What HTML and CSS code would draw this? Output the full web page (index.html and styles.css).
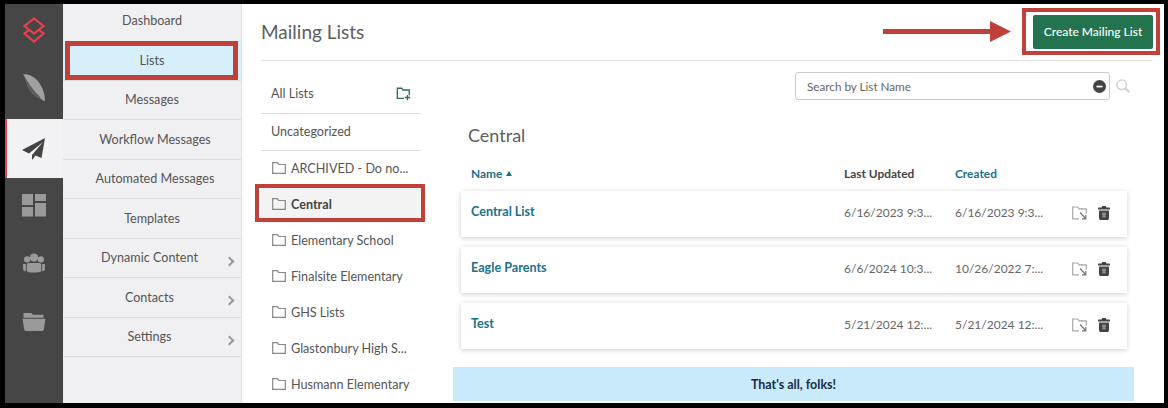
FILE: index.html
```html
<!DOCTYPE html>
<html lang="en">
<head>
<meta charset="utf-8">
<title>Mailing Lists</title>
<link rel="stylesheet" href="styles.css">
</head>
<body>
<div class="app">
  <nav class="rail">
    <div class="rail-item rail-logo"><svg width="22" height="26" viewBox="0 0 22 26" fill="none" stroke="#e8404f" stroke-width="2.2"><path d="M11 1.500 20.500 9 11 16.500 1.500 9Z"/><path d="M6 13 1.500 16.500 11 24.500 20.500 16.500 16 13"/></svg></div>
    <div class="rail-item"><svg width="24" height="30" viewBox="0 0 24 30"><path fill="#a0a0a0" d="M1 1c6 0 13 3 17 10 3 5 5 10 5 17-1 0-3-1-4-2C12 23 7 18 5 11 4 7 3 4 1 1Z"/><path fill="#5c5c5c" d="M1 1c2 3 3 6 4 10 2 7 7 12 14 15l-1-2C12 18 6 10 1 1Z"/></svg></div>
    <div class="rail-item rail-active"><svg width="24" height="24" viewBox="0 0 24 24" fill="#444"><path d="M23 1 0 13l7 3.500L21 5 10 18v5l3.500-4.500 6 2.500Z"/></svg></div>
    <div class="rail-item"><svg width="24" height="23" viewBox="0 0 24 23" fill="#9a9a9a"><path d="M0 0h11v11H0zM0 13h11v9.500H0zM13 0h11v7H13zM13 9h11v13.500H13z"/></svg></div>
    <div class="rail-item"><svg width="24" height="20" viewBox="0 0 24 22" fill="#9a9a9a"><circle cx="12" cy="5" r="4.500"/><circle cx="4.500" cy="7" r="3.500"/><circle cx="19.500" cy="7" r="3.500"/><path d="M6 11h12c1.500 0 2 1 2 3v6c-2 2-14 2-16 0v-6c0-2 .5-3 2-3Z"/><path d="M0 12h3v8c-2 0-3-1-3-2ZM24 12h-3v8c2 0 3-1 3-2Z"/></svg></div>
    <div class="rail-item"><svg width="24" height="19" viewBox="0 0 24 20" fill="#9a9a9a"><path d="M1 1h8l2 2h11v3H1z"/><path d="M0 7h24l-1.500 11c0 1-1 2-2 2h-17c-1 0-2-1-2-2Z"/></svg></div>
  </nav>

  <ul class="menu">
    <li class="menu-item">Dashboard</li>
    <li class="menu-item menu-selected">Lists</li>
    <li class="menu-item">Messages</li>
    <li class="menu-item menu-wide">Workflow Messages</li>
    <li class="menu-item menu-wide">Automated Messages</li>
    <li class="menu-item">Templates</li>
    <li class="menu-item menu-more">Dynamic Content</li>
    <li class="menu-item menu-more">Contacts</li>
    <li class="menu-item menu-more">Settings</li>
  </ul>

  <main class="main">
    <header class="page-head">
      <h1 class="page-title">Mailing Lists</h1>
      <button class="btn-create" type="button">Create Mailing List</button>
    </header>
    <div class="columns">
      <aside class="folders">
        <div class="folder-top">
          <span>All Lists</span>
          <svg width="15" height="14" viewBox="0 0 17 15" fill="none" stroke="#24734f" stroke-width="1.500"><path d="M9 12.500H1.500V1h5l1.500 2h7v6"/><path d="M13 8.500v6M10 11.500h6"/></svg>
        </div>
        <div class="folder-top folder-uncat">Uncategorized</div>
        <div class="folder"><svg class="folder-icon" viewBox="0 0 14 12"><path d="M.7 11.300V.7h4.500l1.500 1.800h6.600v8.800z"/></svg><span>ARCHIVED - Do no...</span></div>
        <div class="folder folder-current"><svg class="folder-icon" viewBox="0 0 14 12"><path d="M.7 11.300V.7h4.500l1.500 1.800h6.600v8.800z"/></svg><span>Central</span></div>
        <div class="folder"><svg class="folder-icon" viewBox="0 0 14 12"><path d="M.7 11.300V.7h4.500l1.500 1.800h6.600v8.800z"/></svg><span>Elementary School</span></div>
        <div class="folder"><svg class="folder-icon" viewBox="0 0 14 12"><path d="M.7 11.300V.7h4.500l1.500 1.800h6.600v8.800z"/></svg><span>Finalsite Elementary</span></div>
        <div class="folder"><svg class="folder-icon" viewBox="0 0 14 12"><path d="M.7 11.300V.7h4.500l1.500 1.800h6.600v8.800z"/></svg><span>GHS Lists</span></div>
        <div class="folder"><svg class="folder-icon" viewBox="0 0 14 12"><path d="M.7 11.300V.7h4.500l1.500 1.800h6.600v8.800z"/></svg><span>Glastonbury High S...</span></div>
        <div class="folder"><svg class="folder-icon" viewBox="0 0 14 12"><path d="M.7 11.300V.7h4.500l1.500 1.800h6.600v8.800z"/></svg><span>Husmann Elementary</span></div>
      </aside>

      <section class="content">
        <div class="search-row">
          <div class="search-box">
            <span>Search by List Name</span>
            <svg width="13" height="13" viewBox="0 0 13 13"><circle cx="6.500" cy="6.500" r="6.500" fill="#444"/><rect x="3.500" y="5.700" width="6" height="1.700" fill="#fff"/></svg>
          </div>
          <svg width="14" height="14" viewBox="0 0 14 14" fill="none" stroke="#d0d0d0" stroke-width="1.500"><circle cx="5.800" cy="5.800" r="4.800"/><path d="M9.300 9.300 13.300 13.300" stroke-width="2"/></svg>
        </div>
        <h2 class="group-title">Central</h2>
        <div class="table-head">
          <span class="col-name sort">Name <i class="caret"></i></span>
          <span class="col-date">Last Updated</span>
          <span class="col-date sort">Created</span>
          <span class="col-actions"></span>
        </div>
        <article class="card">
          <a class="col-name card-name">Central List</a>
          <span class="col-date">6/16/2023 9:3...</span>
          <span class="col-date">6/16/2023 9:3...</span>
          <span class="col-actions">
            <svg width="15" height="14" viewBox="0 0 15 14" fill="none" stroke="#a8a8a8" stroke-width="1.200"><path d="M7 12.800H.7V1h5l1.500 1.800h7v5"/><path d="M8 6.500 13.500 12.500M13.800 9v3.800H10" stroke="#777"/></svg>
            <svg width="12" height="14" viewBox="0 0 12 14" fill="#444"><path d="M4.200 0h3.600l.5 1.500H11c.6 0 1 .4 1 1v1H0v-1c0-.6.4-1 1-1h2.700zM1 4.500h10v7.700c0 1-.8 1.800-1.800 1.800H2.800c-1 0-1.800-.8-1.800-1.800z"/><path d="M4.600 6.500h.9v5h-.9zM6.500 6.500h.9v5h-.9z" fill="#ccc"/></svg>
          </span>
        </article>
        <article class="card">
          <a class="col-name card-name">Eagle Parents</a>
          <span class="col-date">6/6/2024 10:3...</span>
          <span class="col-date">10/26/2022 7:...</span>
          <span class="col-actions">
            <svg width="15" height="14" viewBox="0 0 15 14" fill="none" stroke="#a8a8a8" stroke-width="1.200"><path d="M7 12.800H.7V1h5l1.500 1.800h7v5"/><path d="M8 6.500 13.500 12.500M13.800 9v3.800H10" stroke="#777"/></svg>
            <svg width="12" height="14" viewBox="0 0 12 14" fill="#444"><path d="M4.200 0h3.600l.5 1.500H11c.6 0 1 .4 1 1v1H0v-1c0-.6.4-1 1-1h2.700zM1 4.500h10v7.700c0 1-.8 1.800-1.800 1.800H2.800c-1 0-1.800-.8-1.800-1.800z"/><path d="M4.600 6.500h.9v5h-.9zM6.500 6.500h.9v5h-.9z" fill="#ccc"/></svg>
          </span>
        </article>
        <article class="card">
          <a class="col-name card-name">Test</a>
          <span class="col-date">5/21/2024 12:...</span>
          <span class="col-date">5/21/2024 12:...</span>
          <span class="col-actions">
            <svg width="15" height="14" viewBox="0 0 15 14" fill="none" stroke="#a8a8a8" stroke-width="1.200"><path d="M7 12.800H.7V1h5l1.500 1.800h7v5"/><path d="M8 6.500 13.500 12.500M13.800 9v3.800H10" stroke="#777"/></svg>
            <svg width="12" height="14" viewBox="0 0 12 14" fill="#444"><path d="M4.200 0h3.600l.5 1.500H11c.6 0 1 .4 1 1v1H0v-1c0-.6.4-1 1-1h2.700zM1 4.500h10v7.700c0 1-.8 1.800-1.800 1.800H2.800c-1 0-1.800-.8-1.800-1.800z"/><path d="M4.600 6.500h.9v5h-.9zM6.500 6.500h.9v5h-.9z" fill="#ccc"/></svg>
          </span>
        </article>
        <div class="end-banner">That's all, folks!</div>
      </section>
    </div>
  </main>

  <div class="mark mark-lists"></div>
  <div class="mark mark-central"></div>
  <div class="mark mark-create"></div>
  <svg class="mark-arrow" width="130" height="24" viewBox="0 0 130 24" fill="#c0403a"><path d="M0 9h107V1l21 10.500-21 10.500v-8H0z"/></svg>
</div>
</body>
</html>
```
FILE: styles.css
```css
* { box-sizing: border-box; }
html, body { margin: 0; height: 100%; }
body {
  background: #000;
  padding: 4px 4px 5px 5px;
  font-family: Lato, "Open Sans", sans-serif;
  font-size: 12.6px;
  color: #555;
  overflow: hidden;
}
.app {
  position: relative;
  display: flex;
  height: 399px;
  background: #fff;
  overflow: hidden;
}
.rail {
  width: 58px;
  flex: none;
  background: #464646;
}
.rail-item {
  height: 58px;
  padding-bottom: 4px;
  display: flex;
  align-items: center;
  justify-content: center;
}
.rail-item:nth-child(2) { height: 59px; }
.rail-logo { height: 56px; }
.rail-active {
  height: 59px;
  background: #f2f2f4;
  border-left: 2px solid #e8404f;
  padding: 0 2px 0 0;
}
.menu {
  width: 179px;
  flex: none;
  margin: 0;
  padding: 0;
  list-style: none;
  background: #f0f0f2;
  border-right: 1px solid #e2e2e6;
}
.menu-item {
  position: relative;
  height: 39.500px;
  display: flex;
  align-items: center;
  justify-content: center;
  border-bottom: 1px solid #dcdcde;
  color: #555;
  font-size: 12.6px;
}
.menu-item:first-child { height: 37px; border-bottom: 0; padding-bottom: 5px; }
.menu-selected { background: #d6effb; }
.menu-wide { padding-left: 6px; }
.menu-more { padding-right: 5px; }
.menu-more::after {
  content: "";
  position: absolute;
  right: 8px;
  top: 19px;
  width: 5px;
  height: 5px;
  border-top: 2px solid #999;
  border-right: 2px solid #999;
  transform: rotate(45deg);
}
.main {
  flex: 1;
  min-width: 0;
  padding: 0 12px 0 19px;
  display: flex;
  flex-direction: column;
}
.page-head {
  height: 57px;
  flex: none;
  display: flex;
  align-items: center;
  justify-content: space-between;
  border-bottom: 1px solid #dedee0;
}
.page-title {
  margin: -2px 0 0;
  font-size: 19px;
  font-weight: 400;
  color: #5e5e5e;
}
.btn-create {
  width: 120px;
  height: 34px;
  margin-right: -1px;
  margin-top: -1px;
  border: 0;
  border-radius: 2px;
  background: #24734f;
  color: #fff;
  font: 500 12px Lato, sans-serif;
  padding: 0;
}
.columns { display: flex; flex: 1; min-height: 0; }
.folders { width: 160px; flex: none; }
.folder-top {
  height: 53px;
  padding: 0 10px 12px;
  display: flex;
  align-items: flex-end;
  justify-content: space-between;
  border-bottom: 1px solid #dedee0;
  color: #555;
}
.folder-uncat {
  height: 37px;
  padding-bottom: 11px;
}
.folder {
  height: 36px;
  display: flex;
  align-items: center;
  gap: 5px;
  padding: 0 0 2px 11px;
  color: #555;
  white-space: nowrap;
}
.folder-current {
  font-weight: 700;
  color: #444;
  background: #f3f3f3;
}
.folder-icon {
  width: 14px;
  height: 12px;
  fill: none;
  stroke: #888;
  stroke-width: 1.200;
  flex: none;
}
.content {
  flex: 1;
  min-width: 0;
  padding: 11px 25px 0 40px;
}
.search-row {
  display: flex;
  align-items: center;
  gap: 6px;
  margin: 0 -6px 0 -40px;
  padding-left: 374px;
}
.search-box {
  width: 315px;
  height: 28px;
  border: 1px solid #ccc;
  border-radius: 3px;
  padding: 0 3px 0 11px;
  display: flex;
  align-items: center;
  justify-content: space-between;
  color: #666;
  font-size: 11.7px;
}
.group-title {
  margin: 24px 0 0 7px;
  font-size: 18px;
  line-height: 22px;
  font-weight: 400;
  color: #5e5e5e;
}
.table-head {
  display: flex;
  align-items: center;
  height: 20px;
  margin-top: 17px;
  margin-bottom: 8px;
  font-size: 11.9px;
  font-weight: 700;
  color: #444;
}
.sort { color: #1c7089; }
.caret {
  display: inline-block;
  width: 0;
  height: 0;
  margin-left: 1px;
  margin-bottom: 2px;
  border-left: 3px solid transparent;
  border-right: 3px solid transparent;
  border-bottom: 5px solid #1c7089;
}
.col-name { flex: 1; padding-left: 10px; }
.table-head .col-date, .card .col-date { width: 111px; flex: none; }
.col-actions {
  width: 61px;
  flex: none;
  display: flex;
  align-items: center;
  gap: 11px;
  padding-left: 6px;
}
.card {
  display: flex;
  align-items: center;
  height: 46px;
  margin-bottom: 10px;
  background: #fff;
  box-shadow: 0 1px 5px rgba(0,0,0,.2);
  padding-bottom: 3px;
  font-size: 12px;
  color: #666;
}
.card-name {
  font-size: 12.6px;
  font-weight: 700;
  color: #1c7089;
  padding-bottom: 2px;
}
.end-banner {
  margin: 18px -7px 0 -8px;
  height: 34px;
  background: #c8eafa;
  display: flex;
  align-items: center;
  justify-content: center;
  font-size: 12.5px;
  font-weight: 700;
  color: #1a2a44;
}
.mark {
  position: absolute;
  border: 4px solid #c0403a;
  pointer-events: none;
}
.mark-lists { left: 60px; top: 37px; width: 173px; height: 39px; border-width: 5px; }
.mark-central { left: 250px; top: 180px; width: 170px; height: 38px; }
.mark-create { left: 1017px; top: 4px; width: 138px; height: 47px; }
.mark-arrow { position: absolute; left: 878px; top: 16px; }
```
